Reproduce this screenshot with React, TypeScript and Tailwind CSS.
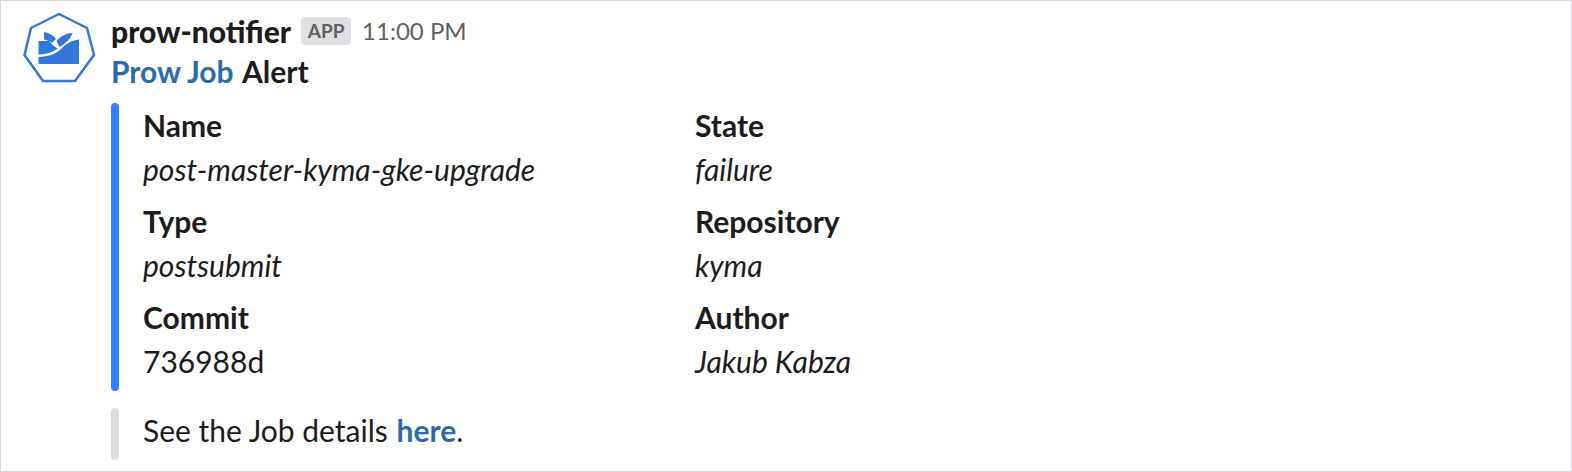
export default function App() {
  const fields = [
    ["Name", "post-master-kyma-gke-upgrade", "State", "failure", true, true],
    ["Type", "postsubmit", "Repository", "kyma", true, true],
    ["Commit", "736988d", "Author", "Jakub Kabza", false, true],
  ] as const;
  return (
    <div className="w-[1572px] h-[472px] box-border overflow-hidden bg-white border border-[#d5d8dc] flex font-['Lato','Noto_Sans',sans-serif] text-[#1d1c1d]">
      <div className="w-[110px] shrink-0 pt-[11px] pl-[21px]">
        <svg width="74" height="72" viewBox="22 12 74 72">
          <path d="M59 14 L87 28 L94 55 L75 81 L43 81 L24.500 55 L31 28 Z" fill="none" stroke="#3277dc" strokeWidth="2.500" strokeLinejoin="round" />
          <path d="M44 32 C49 33 53 35 56 39 L52 43 C50 41.500 47 40 44 39.500 Z" fill="#3277dc" />
          <path d="M72.500 33 C66 33.500 60 36.500 56.500 41 L59.500 47 L62 45.500 C67 42 71 38 72.500 33 Z" fill="#3277dc" />
          <path d="M38.500 41 L49 41 C52 44.500 55 47 57.500 48.500 C53 52.500 47 54 38.500 54.500 Z" fill="#3277dc" />
          <path d="M79 39.500 L79 64 L38.500 64 L38.500 57 C48 56.500 55 54.500 60.500 49.500 C66 43.500 71 40.500 79 39.500 Z" fill="#3277dc" />
        </svg>
      </div>
      <div className="flex-1 pt-[12px]">
        <div className="flex items-center h-[36px]">
          <span className="text-[30px] font-black leading-[36px]">prow-notifier</span>
          <span className="ml-[10px] h-[28px] w-[50px] rounded-[4px] bg-[#e0e0e0] text-[#616061] text-[19px] font-bold flex items-center justify-center">APP</span>
          <span className="ml-[11px] text-[#616061] text-[24px] leading-[36px]">11:00 PM</span>
        </div>
        <div className="text-[30px] leading-[44px] font-bold">
          <span className="text-[#2b6ca8]">Prow Job</span> <span className="ml-[1px]">Alert</span>
        </div>
        <div className="mt-[10px] flex">
          <div className="w-[8px] h-[288px] rounded-[4px] bg-[#3381ff] shrink-0" />
          <div className="ml-[24px] self-start grid grid-cols-[552px_1fr] gap-y-[8px] text-[30px] leading-[44px]">
            {fields.map(([a, b, c, d, i1, i2]) => (
              <div className="contents" key={a}>
                <div>
                  <div className="font-bold">{a}</div>
                  <div className={i1 ? "italic" : ""}>{b}</div>
                </div>
                <div>
                  <div className="font-bold">{c}</div>
                  <div className={i2 ? "italic" : ""}>{d}</div>
                </div>
              </div>
            ))}
          </div>
        </div>
        <div className="mt-[17px] flex">
          <div className="w-[8px] h-[52px] rounded-[4px] bg-[#dddddd] shrink-0" />
          <div className="ml-[24px] text-[30px] leading-[44px]">
            See the Job details <span className="font-bold text-[#2b6ca8] ml-[1px]">here</span>.
          </div>
        </div>
      </div>
    </div>
  );
}
